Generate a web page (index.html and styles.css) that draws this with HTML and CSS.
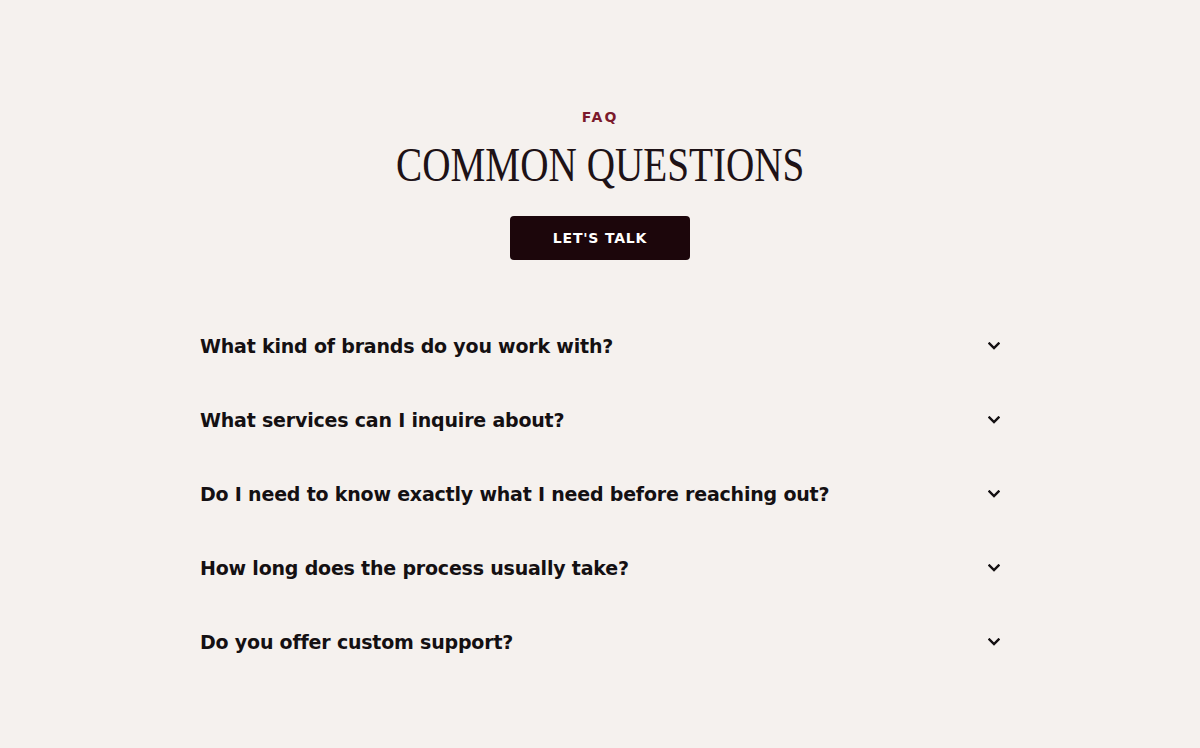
FILE: index.html
```html
<!DOCTYPE html>
<html lang="en">
<head>
  <meta charset="UTF-8">
  <meta name="viewport" content="width=device-width, initial-scale=1.0">
  <title>FAQ</title>
  <link rel="stylesheet" href="styles.css">
</head>
<body>
  <section class="faq">
    <div class="faq-head">
      <p class="eyebrow">FAQ</p>
      <h1 class="title"><span>COMMON QUESTIONS</span></h1>
      <a class="btn" href="#">LET'S TALK</a>
    </div>

    <div class="faq-list">
      <div class="faq-item">
        <span class="question">What kind of brands do you work with?</span>
        <svg class="chevron" viewBox="0 0 12 8"><path d="M1.5 1.5 L6 6 L10.5 1.5"/></svg>
      </div>
      <div class="faq-item">
        <span class="question">What services can I inquire about?</span>
        <svg class="chevron" viewBox="0 0 12 8"><path d="M1.5 1.5 L6 6 L10.5 1.5"/></svg>
      </div>
      <div class="faq-item">
        <span class="question">Do I need to know exactly what I need before reaching out?</span>
        <svg class="chevron" viewBox="0 0 12 8"><path d="M1.5 1.5 L6 6 L10.5 1.5"/></svg>
      </div>
      <div class="faq-item">
        <span class="question">How long does the process usually take?</span>
        <svg class="chevron" viewBox="0 0 12 8"><path d="M1.5 1.5 L6 6 L10.5 1.5"/></svg>
      </div>
      <div class="faq-item">
        <span class="question">Do you offer custom support?</span>
        <svg class="chevron" viewBox="0 0 12 8"><path d="M1.5 1.5 L6 6 L10.5 1.5"/></svg>
      </div>
    </div>
  </section>
</body>
</html>
```

FILE: styles.css
```css
body {
  margin: 0;
  background-color: #f5f1ee;
  font-family: "DejaVu Sans", Arial, sans-serif;
  color: #141012;
}
.faq {
  max-width: 800px;
  margin: 0 auto;
  padding: 108px 0 60px;
}
.faq-head {
  display: flex;
  flex-direction: column;
  align-items: center;
}
.eyebrow {
  margin: 0;
  font-size: 14px;
  font-weight: bold;
  letter-spacing: 2px;
  color: #7b1a2c;
  line-height: 18px;
}
.title {
  margin: 11px 0 0;
  font-family: "Liberation Serif", "Times New Roman", serif;
  font-weight: normal;
  font-size: 49px;
  line-height: 56px;
  color: #1e1216;
}
.title span {
  display: inline-block;
  transform: scaleX(0.8);
}
.btn {
  margin-top: 23px;
  width: 180px;
  height: 44px;
  display: flex;
  align-items: center;
  justify-content: center;
  background-color: #1c060b;
  border-radius: 4px;
  color: #fff;
  text-decoration: none;
  font-size: 14px;
  font-weight: bold;
  letter-spacing: 0.8px;
}
.faq-list {
  margin-top: 73px;
  display: flex;
  flex-direction: column;
  gap: 48px;
}
.faq-item {
  display: flex;
  align-items: center;
  justify-content: space-between;
  height: 26px;
}
.question {
  font-size: 19px;
  font-weight: bold;
  letter-spacing: -0.2px;
  color: #141012;
}
.chevron {
  width: 12px;
  height: 8px;
  fill: none;
  stroke: #141012;
  stroke-width: 2.4;
  stroke-linecap: square;
}
```
